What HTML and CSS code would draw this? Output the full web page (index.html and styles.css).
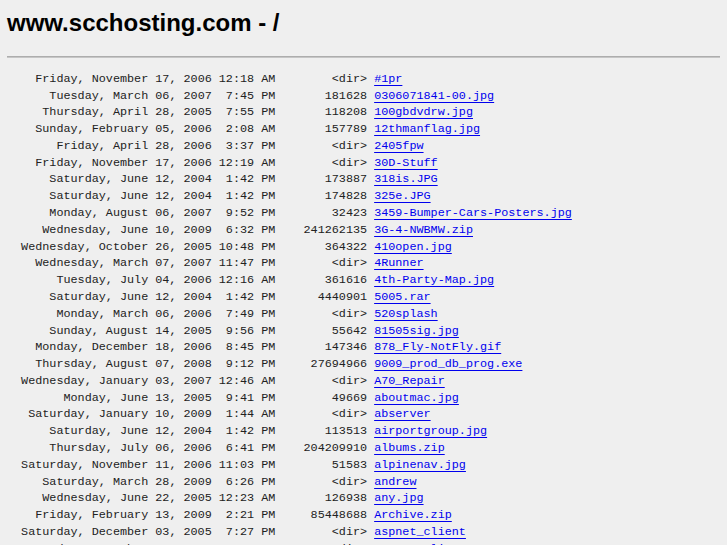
FILE: index.html
```html
<!DOCTYPE html>
<html>
<head>
<meta charset="utf-8">
<title>www.scchosting.com - /</title>
<link rel="stylesheet" href="styles.css">
</head>
<body>
<h1 class="title">www.scchosting.com - /</h1>
<hr class="rule">
<div class="listing">
<div class="row"><span class="date">Friday, November 17, 2006 12:18 AM</span><span class="size">&lt;dir&gt;</span><a class="name" href="#">#1pr</a></div>
<div class="row"><span class="date">Tuesday, March 06, 2007  7:45 PM</span><span class="size">181628</span><a class="name" href="#">0306071841-00.jpg</a></div>
<div class="row"><span class="date">Thursday, April 28, 2005  7:55 PM</span><span class="size">118208</span><a class="name" href="#">100gbdvdrw.jpg</a></div>
<div class="row"><span class="date">Sunday, February 05, 2006  2:08 AM</span><span class="size">157789</span><a class="name" href="#">12thmanflag.jpg</a></div>
<div class="row"><span class="date">Friday, April 28, 2006  3:37 PM</span><span class="size">&lt;dir&gt;</span><a class="name" href="#">2405fpw</a></div>
<div class="row"><span class="date">Friday, November 17, 2006 12:19 AM</span><span class="size">&lt;dir&gt;</span><a class="name" href="#">30D-Stuff</a></div>
<div class="row"><span class="date">Saturday, June 12, 2004  1:42 PM</span><span class="size">173887</span><a class="name" href="#">318is.JPG</a></div>
<div class="row"><span class="date">Saturday, June 12, 2004  1:42 PM</span><span class="size">174828</span><a class="name" href="#">325e.JPG</a></div>
<div class="row"><span class="date">Monday, August 06, 2007  9:52 PM</span><span class="size">32423</span><a class="name" href="#">3459-Bumper-Cars-Posters.jpg</a></div>
<div class="row"><span class="date">Wednesday, June 10, 2009  6:32 PM</span><span class="size">241262135</span><a class="name" href="#">3G-4-NWBMW.zip</a></div>
<div class="row"><span class="date">Wednesday, October 26, 2005 10:48 PM</span><span class="size">364322</span><a class="name" href="#">410open.jpg</a></div>
<div class="row"><span class="date">Wednesday, March 07, 2007 11:47 PM</span><span class="size">&lt;dir&gt;</span><a class="name" href="#">4Runner</a></div>
<div class="row"><span class="date">Tuesday, July 04, 2006 12:16 AM</span><span class="size">361616</span><a class="name" href="#">4th-Party-Map.jpg</a></div>
<div class="row"><span class="date">Saturday, June 12, 2004  1:42 PM</span><span class="size">4440901</span><a class="name" href="#">5005.rar</a></div>
<div class="row"><span class="date">Monday, March 06, 2006  7:49 PM</span><span class="size">&lt;dir&gt;</span><a class="name" href="#">520splash</a></div>
<div class="row"><span class="date">Sunday, August 14, 2005  9:56 PM</span><span class="size">55642</span><a class="name" href="#">81505sig.jpg</a></div>
<div class="row"><span class="date">Monday, December 18, 2006  8:45 PM</span><span class="size">147346</span><a class="name" href="#">878_Fly-NotFly.gif</a></div>
<div class="row"><span class="date">Thursday, August 07, 2008  9:12 PM</span><span class="size">27694966</span><a class="name" href="#">9009_prod_db_prog.exe</a></div>
<div class="row"><span class="date">Wednesday, January 03, 2007 12:46 AM</span><span class="size">&lt;dir&gt;</span><a class="name" href="#">A70_Repair</a></div>
<div class="row"><span class="date">Monday, June 13, 2005  9:41 PM</span><span class="size">49669</span><a class="name" href="#">aboutmac.jpg</a></div>
<div class="row"><span class="date">Saturday, January 10, 2009  1:44 AM</span><span class="size">&lt;dir&gt;</span><a class="name" href="#">abserver</a></div>
<div class="row"><span class="date">Saturday, June 12, 2004  1:42 PM</span><span class="size">113513</span><a class="name" href="#">airportgroup.jpg</a></div>
<div class="row"><span class="date">Thursday, July 06, 2006  6:41 PM</span><span class="size">204209910</span><a class="name" href="#">albums.zip</a></div>
<div class="row"><span class="date">Saturday, November 11, 2006 11:03 PM</span><span class="size">51583</span><a class="name" href="#">alpinenav.jpg</a></div>
<div class="row"><span class="date">Saturday, March 28, 2009  6:26 PM</span><span class="size">&lt;dir&gt;</span><a class="name" href="#">andrew</a></div>
<div class="row"><span class="date">Wednesday, June 22, 2005 12:23 AM</span><span class="size">126938</span><a class="name" href="#">any.jpg</a></div>
<div class="row"><span class="date">Friday, February 13, 2009  2:21 PM</span><span class="size">85448688</span><a class="name" href="#">Archive.zip</a></div>
<div class="row"><span class="date">Saturday, December 03, 2005  7:27 PM</span><span class="size">&lt;dir&gt;</span><a class="name" href="#">aspnet_client</a></div>
<div class="row"><span class="date">Saturday, December 03, 2005  7:27 PM</span><span class="size">&lt;dir&gt;</span><a class="name" href="#">aspnet_client2</a></div>
</div>
</body>
</html>
```
FILE: styles.css
```css
html, body {
  background: #efefef;
}
body {
  margin: 0;
  padding: 7px;
  color: #000;
}
.title {
  margin: 2.4px 0 0;
  font-family: "Liberation Sans", Arial, sans-serif;
  font-weight: bold;
  font-size: 24px;
  line-height: 28px;
}
.rule {
  margin: 18.6px 0 0;
  height: 0;
  border: 0;
  border-top: 1px solid #adadad;
  border-bottom: 1px solid #c6c6c6;
}
.listing {
  margin-top: 12.8px;
  font-family: "Liberation Mono", "Courier New", monospace;
  font-size: 11.77px;
  line-height: 16.78px;
  color: #222;
}
.row {
  display: grid;
  grid-template-columns: 38ch 13ch auto;
  justify-content: start;
  white-space: pre;
}
.date, .size {
  text-align: right;
}
.name {
  margin-left: 1ch;
  color: #0000ee;
  text-decoration: underline;
  text-decoration-thickness: 1px;
  text-underline-offset: 3px;
}
```
